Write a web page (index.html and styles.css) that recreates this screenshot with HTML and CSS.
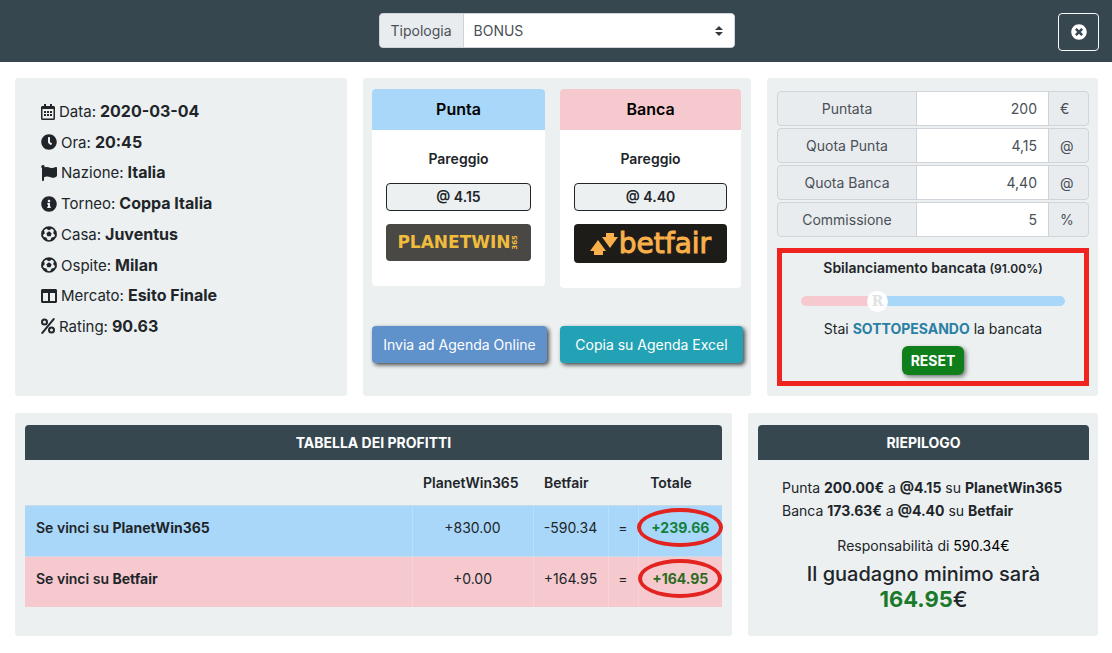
FILE: index.html
```html
<!DOCTYPE html>
<html lang="it">
<head>
    <meta charset="UTF-8">
    <meta name="viewport" content="width=device-width, initial-scale=1.0">
    <title>Calcolatore BONUS</title>
    <link rel="stylesheet" href="styles.css">
</head>
<body>
    <header class="topbar">
        <div class="input-group tipologia">
            <label for="tipologia">Tipologia</label>
            <select id="tipologia">
                <option>BONUS</option>
            </select>
        </div>
        <button type="button" class="close" aria-label="Chiudi">
            <svg class="icon" viewBox="0 0 512 512"><path d="M256 8C119 8 8 119 8 256s111 248 248 248 248-111 248-248S393 8 256 8zm121.600 313.100c4.700 4.700 4.700 12.300 0 17L338 377.600c-4.700 4.700-12.300 4.700-17 0L256 312l-65.100 65.600c-4.700 4.700-12.300 4.700-17 0L134.400 338c-4.700-4.700-4.700-12.300 0-17l65.600-65-65.600-65.100c-4.700-4.700-4.700-12.300 0-17l39.600-39.600c4.700-4.700 12.300-4.700 17 0l65 65.700 65.100-65.600c4.700-4.700 12.300-4.700 17 0l39.600 39.600c4.700 4.700 4.700 12.300 0 17L312 256l65.600 65.100z"/></svg>
        </button>
    </header>

    <main>
        <div class="row row-top">
            <section class="panel">
                <ul class="event">
                    <li>
                        <svg class="icon narrow" viewBox="0 0 448 512"><path d="M148 288h-40c-6.600 0-12-5.400-12-12v-40c0-6.600 5.400-12 12-12h40c6.600 0 12 5.400 12 12v40c0 6.600-5.400 12-12 12zm108-12v-40c0-6.600-5.400-12-12-12h-40c-6.600 0-12 5.400-12 12v40c0 6.600 5.400 12 12 12h40c6.600 0 12-5.400 12-12zm96 0v-40c0-6.600-5.400-12-12-12h-40c-6.600 0-12 5.400-12 12v40c0 6.600 5.400 12 12 12h40c6.600 0 12-5.400 12-12zm-96 96v-40c0-6.600-5.400-12-12-12h-40c-6.600 0-12 5.400-12 12v40c0 6.600 5.400 12 12 12h40c6.600 0 12-5.400 12-12zm-96 0v-40c0-6.600-5.400-12-12-12h-40c-6.600 0-12 5.400-12 12v40c0 6.600 5.400 12 12 12h40c6.600 0 12-5.400 12-12zm192 0v-40c0-6.600-5.400-12-12-12h-40c-6.600 0-12 5.400-12 12v40c0 6.600 5.400 12 12 12h40c6.600 0 12-5.400 12-12zm96-260v352c0 26.500-21.500 48-48 48H48c-26.500 0-48-21.500-48-48V112c0-26.500 21.500-48 48-48h48V12c0-6.600 5.400-12 12-12h40c6.600 0 12 5.400 12 12v52h128V12c0-6.600 5.400-12 12-12h40c6.600 0 12 5.400 12 12v52h48c26.500 0 48 21.500 48 48zm-48 346V160H48v298c0 3.300 2.700 6 6 6h340c3.300 0 6-2.700 6-6z"/></svg>
                        Data: <b>2020-03-04</b>
                    </li>
                    <li>
                        <svg class="icon" viewBox="0 0 512 512"><path d="M256,8C119,8,8,119,8,256S119,504,256,504,504,393,504,256,393,8,256,8Zm92.490,313h0l-20,25a16,16,0,0,1-22.490,2.500h0l-67-49.720a40,40,0,0,1-15-31.230V112a16,16,0,0,1,16-16h32a16,16,0,0,1,16,16V256l58,42.500A16,16,0,0,1,348.490,321Z"/></svg>
                        Ora: <b>20:45</b>
                    </li>
                    <li>
                        <svg class="icon" viewBox="0 0 512 512"><path d="M349.565 98.783C295.978 98.783 251.721 64 184.348 64c-24.955 0-47.309 4.384-68.045 12.013a55.947 55.947 0 0 0 3.586-23.562C118.117 24.015 94.806 1.206 66.338.048 34.345-1.254 8 24.296 8 56c0 19.026 9.497 35.825 24 45.945V488c0 13.255 10.745 24 24 24h16c13.255 0 24-10.745 24-24v-94.400c28.311-12.064 63.582-22.122 114.435-22.122 53.588 0 97.844 34.783 165.217 34.783 48.169 0 86.667-16.294 122.505-40.858C506.840 359.452 512 349.571 512 339.045v-243.100c0-23.393-24.269-38.870-45.485-29.016-34.338 15.948-76.454 31.854-116.950 31.854z"/></svg>
                        Nazione: <b>Italia</b>
                    </li>
                    <li>
                        <svg class="icon" viewBox="0 0 512 512"><path d="M256 8C119.043 8 8 119.083 8 256c0 136.997 111.043 248 248 248s248-111.003 248-248C504 119.083 392.957 8 256 8zm0 110c23.196 0 42 18.804 42 42s-18.804 42-42 42-42-18.804-42-42 18.804-42 42-42zm56 254c0 6.627-5.373 12-12 12h-88c-6.627 0-12-5.373-12-12v-24c0-6.627 5.373-12 12-12h12v-64h-12c-6.627 0-12-5.373-12-12v-24c0-6.627 5.373-12 12-12h64c6.627 0 12 5.373 12 12v100h12c6.627 0 12 5.373 12 12v24z"/></svg>
                        Torneo: <b>Coppa Italia</b>
                    </li>
                    <li>
                        <svg class="icon" viewBox="0 0 512 512">
                            <defs>
                                <g id="ball">
                                    <circle cx="256" cy="256" r="222" fill="none" stroke="currentColor" stroke-width="52"/>
                                    <path d="M256 168l84 61-32 99H204l-32-99zM150 40h212l-44 60-62 38-62-38zM490 160l10 190-60-70-50-50 20-70zM440 400l-120 90-10-70 30-52 70-16zM72 400l120 90 10-70-30-52-70-16zM22 160L12 350l60-70 50-50-20-70z"/>
                                </g>
                            </defs>
                            <use href="#ball"/>
                        </svg>
                        Casa: <b>Juventus</b>
                    </li>
                    <li>
                        <svg class="icon" viewBox="0 0 512 512"><use href="#ball"/></svg>
                        Ospite: <b>Milan</b>
                    </li>
                    <li>
                        <svg class="icon" viewBox="0 0 512 512"><path d="M464 32H48C21.490 32 0 53.490 0 80v352c0 26.510 21.490 48 48 48h416c26.510 0 48-21.490 48-48V80c0-26.510-21.490-48-48-48zM224 416H64V160h160v256zm224 0H288V160h160v256z"/></svg>
                        Mercato: <b>Esito Finale</b>
                    </li>
                    <li>
                        <svg class="icon narrow" viewBox="0 0 448 512">
                            <g fill="none" stroke="currentColor" stroke-width="64">
                                <circle cx="112" cy="128" r="80"/>
                                <circle cx="336" cy="384" r="80"/>
                                <path d="M406 36L42 476" stroke-linecap="round"/>
                            </g>
                        </svg>
                        Rating: <b>90.63</b>
                    </li>
                </ul>
            </section>

            <section class="panel bets">
                <div class="cards">
                    <article class="card">
                        <h2 class="punta">Punta</h2>
                        <div class="card-body">
                            <p>Pareggio</p>
                            <div class="odds">@ 4.15</div>
                            <div class="logo planetwin">PLANETWIN<small>365</small></div>
                        </div>
                    </article>
                    <article class="card">
                        <h2 class="banca">Banca</h2>
                        <div class="card-body">
                            <p>Pareggio</p>
                            <div class="odds">@ 4.40</div>
                            <div class="logo betfair">
                                <svg viewBox="0 0 28 22"><path d="M8 7l8 11h-3v4H4v-4H0zM16 0h8v4h4l-8 11-8-11h4z"/></svg>
                                betfair
                            </div>
                        </div>
                    </article>
                </div>
                <div class="actions">
                    <button type="button" class="btn online">Invia ad Agenda Online</button>
                    <button type="button" class="btn excel">Copia su Agenda Excel</button>
                </div>
            </section>

            <section class="panel calc">
                <div class="fields">
                    <div class="input-group">
                        <label for="puntata">Puntata</label>
                        <input type="text" id="puntata" value="200">
                        <span class="unit">€</span>
                    </div>
                    <div class="input-group">
                        <label for="quotaPunta">Quota Punta</label>
                        <input type="text" id="quotaPunta" value="4,15">
                        <span class="unit">@</span>
                    </div>
                    <div class="input-group">
                        <label for="quotaBanca">Quota Banca</label>
                        <input type="text" id="quotaBanca" value="4,40">
                        <span class="unit">@</span>
                    </div>
                    <div class="input-group">
                        <label for="commissione">Commissione</label>
                        <input type="text" id="commissione" value="5">
                        <span class="unit">%</span>
                    </div>
                </div>
                <div class="balance">
                    <label for="sbilanciamento">Sbilanciamento bancata <small>(91.00%)</small></label>
                    <div class="slider">
                        <input type="range" id="sbilanciamento" min="88" max="99" value="91">
                        <span class="thumb-text">R</span>
                    </div>
                    <p>Stai <b>SOTTOPESANDO</b> la bancata</p>
                    <button type="button" class="reset">RESET</button>
                </div>
            </section>
        </div>

        <div class="row row-bottom">
            <section class="panel profits">
                <h3>TABELLA DEI PROFITTI</h3>
                <table>
                    <colgroup>
                        <col>
                        <col class="col-book">
                        <col class="col-exchange">
                        <col class="col-equal">
                        <col class="col-total">
                    </colgroup>
                    <thead>
                        <tr>
                            <th></th>
                            <th>PlanetWin365</th>
                            <th>Betfair</th>
                            <th></th>
                            <th>Totale</th>
                        </tr>
                    </thead>
                    <tbody>
                        <tr class="punta">
                            <th>Se vinci su <b>PlanetWin365</b></th>
                            <td>+830.00</td>
                            <td>-590.34</td>
                            <td>=</td>
                            <td><span class="total">+239.66</span></td>
                        </tr>
                        <tr class="banca">
                            <th>Se vinci su <b>Betfair</b></th>
                            <td>+0.00</td>
                            <td>+164.95</td>
                            <td>=</td>
                            <td><span class="total">+164.95</span></td>
                        </tr>
                    </tbody>
                </table>
            </section>

            <section class="panel summary">
                <h3>RIEPILOGO</h3>
                <p class="steps">
                    Punta <b>200.00€</b> a <b>@4.15</b> su <b>PlanetWin365</b><br>
                    Banca <b>173.63€</b> a <b>@4.40</b> su <b>Betfair</b>
                </p>
                <p class="liability">Responsabilità di <span>590.34€</span></p>
                <p class="gain">Il guadagno minimo sarà <span><b>164.95</b>€</span></p>
            </section>
        </div>
    </main>
</body>
</html>
```
FILE: styles.css
```css
* {
    box-sizing: border-box;
}
body {
    margin: 0;
    font-family: Inter, "Liberation Sans", sans-serif;
    font-size: 14px;
    line-height: 23px;
    color: #212529;
    background: #fff;
}
h2, h3, p, ul {
    margin: 0;
    padding: 0;
}
b {
    font-weight: 700;
}
button, input, select {
    font: inherit;
}
.icon {
    width: 16px;
    height: 16px;
    fill: currentColor;
}
.icon.narrow {
    width: 14px;
}
.punta {
    background: #a9d7fa;
}
.banca {
    background: #f6c9cf;
}

/* top bar */
.topbar {
    display: grid;
    grid-template-columns: 1fr 356px 1fr;
    align-items: start;
    padding: 13px 13px 11px 14px;
    background: #37474f;
}
.tipologia {
    grid-column: 2;
}
.close {
    justify-self: end;
    display: flex;
    align-items: center;
    justify-content: center;
    width: 41px;
    height: 38px;
    border: 1px solid #f8f9fa;
    border-radius: 4px;
    background: none;
    color: #fff;
    cursor: pointer;
}

/* input groups */
.input-group {
    display: flex;
    height: 35px;
    border: 1px solid #ced4da;
    border-radius: 4px;
    overflow: hidden;
    background: #e9ecef;
    color: #495057;
    line-height: 33px;
}
.input-group label {
    padding: 0 11px;
    border-right: 1px solid #ced4da;
    text-align: center;
}
.input-group input, .input-group select {
    flex: 1;
    min-width: 0;
    border: 0;
    padding: 0 11px;
    background: #fff;
    color: #495057;
}
.input-group input {
    text-align: right;
}
.input-group select {
    appearance: none;
    padding: 0 10px;
    background: #fff url("data:image/svg+xml,%3Csvg xmlns='http://www.w3.org/2000/svg' viewBox='0 0 4 5'%3E%3Cpath fill='%23343a40' d='M2 0L0 2h4zm0 5L0 3h4z'/%3E%3C/svg%3E") no-repeat right 11px center / 8px 10px;
}

/* panels */
main {
    display: grid;
    gap: 17px;
    padding: 16px 14px 16px 15px;
}
.row {
    display: grid;
    gap: 16px;
}
.row-top {
    grid-template-columns: minmax(0, 332fr) minmax(0, 388fr) minmax(0, 331fr);
}
.row-bottom {
    grid-template-columns: minmax(0, 717fr) minmax(0, 350fr);
}
.panel {
    border-radius: 3px;
    background: #ecf0f1;
}

/* event details */
.event {
    display: flex;
    flex-direction: column;
    justify-content: space-between;
    height: 100%;
    padding: 22px 26px 58px;
    list-style: none;
    font-size: 15px;
}
.event li {
    display: flex;
    align-items: center;
    gap: 4px;
}
.event b {
    font-size: 16px;
}

/* punta / banca */
.bets {
    padding: 11px 8px 32px 9px;
}
.cards {
    display: grid;
    grid-template-columns: 173fr 181fr;
    gap: 15px;
    align-items: start;
    padding-right: 2px;
}
.card {
    border-radius: 4px;
    overflow: hidden;
    background: #fff;
    text-align: center;
    font-weight: 600;
}
.card h2 {
    font-size: 16px;
    line-height: 41px;
    font-weight: 600;
    color: #000;
}
.card-body {
    padding: 17px 14px 25px;
}
.odds {
    margin: 13px 0;
    border: 1px solid #212529;
    border-radius: 4px;
    line-height: 26px;
    background: #ecf0f1;
}
.logo {
    display: flex;
    align-items: center;
    justify-content: center;
    border-radius: 4px;
}
.planetwin {
    height: 37px;
    background: #4a4845;
    color: #f0bc3c;
    font-family: "DejaVu Sans", sans-serif;
    font-size: 17px;
    font-weight: 700;
}
.planetwin small {
    writing-mode: vertical-rl;
    transform: rotate(180deg);
    font-size: 7px;
    line-height: 9px;
}
.betfair {
    height: 39px;
    background: #1e1c19;
    color: #f9b04b;
    font-family: "DejaVu Sans", sans-serif;
    font-size: 28px;
    font-weight: 400;
    -webkit-text-stroke: 1px #f9b04b;
}
.betfair svg {
    flex-shrink: 0;
    width: 28px;
    height: 22px;
    margin-right: 1px;
    fill: currentColor;
}
.actions {
    display: grid;
    grid-template-columns: 175fr 183fr;
    gap: 13px;
    margin-top: 38px;
}
.btn {
    height: 37px;
    padding: 0;
    border: 0;
    border-radius: 4px;
    color: #fff;
    box-shadow: 2px 2px 4px rgba(0, 0, 0, 0.7);
    cursor: pointer;
}
.online {
    background: #5f91cb;
}
.excel {
    background: #23a2b6;
}

/* calculator */
.calc {
    padding: 13px 9px 10px 10px;
}
.fields {
    display: grid;
    gap: 2px;
}
.calc .input-group label {
    width: 139px;
}
.unit {
    width: 40px;
    padding-left: 11px;
    border-left: 1px solid #ced4da;
}
.balance {
    margin-top: 11px;
    padding: 3px 19px 6px;
    border: 5px solid #f0241f;
    text-align: center;
}
.balance label {
    font-weight: 600;
}
.balance small {
    font-size: 12px;
}
.slider {
    position: relative;
    display: flex;
    margin: 10px 0 5px;
}
.slider input {
    appearance: none;
    width: 100%;
    height: 10px;
    margin: 6px 0;
    border-radius: 5px;
    background: linear-gradient(to right, #f6c9cf 29%, #a9d7fa 29%);
}
.slider input::-webkit-slider-thumb {
    appearance: none;
    width: 21px;
    height: 21px;
    border-radius: 50%;
    background: #fff;
}
.thumb-text {
    position: absolute;
    left: 29%;
    top: 0;
    transform: translateX(-50%);
    font-family: "DejaVu Serif", serif;
    font-size: 14px;
    font-weight: 700;
    line-height: 22px;
    color: #dfe1e3;
    pointer-events: none;
}
.balance b {
    color: #2a7fa5;
}
.reset {
    height: 29px;
    margin-top: 6px;
    padding: 0 9px;
    border: 0;
    border-radius: 6px;
    background: #0f7f1c;
    color: #fff;
    font-weight: 700;
    box-shadow: 2px 2px 4px rgba(0, 0, 0, 0.5);
    cursor: pointer;
}

/* profits table */
.profits {
    padding: 12px 10px 29px;
}
h3 {
    border-radius: 4px 4px 0 0;
    background: #37474f;
    color: #fff;
    font-size: 14px;
    line-height: 35px;
    text-align: center;
}
table {
    width: 100%;
    table-layout: fixed;
    border-collapse: collapse;
}
.col-book {
    width: 121px;
}
.col-exchange {
    width: 75px;
}
.col-equal {
    width: 30px;
}
.col-total {
    width: 84px;
}
th, td {
    padding: 11px 0;
    text-align: center;
}
th {
    padding-left: 11px;
    text-align: left;
    font-weight: 600;
}
thead th:last-child {
    padding-left: 0;
    padding-right: 18px;
    text-align: center;
}
tbody th, tbody td {
    padding-top: 10px;
    padding-bottom: 17px;
    border-top: 1px solid #c9dbe8;
}
tbody td {
    border-left: 1px solid rgba(255, 255, 255, 0.2);
}
.total {
    position: relative;
    color: #14803c;
    font-weight: 700;
}
.total::after {
    content: "";
    position: absolute;
    inset: -11px -14px;
    border: 4px solid #e2231f;
    border-radius: 50%;
}
.banca .total {
    color: #2d6b1f;
}

/* summary */
.summary {
    padding: 12px 9px 24px 10px;
    text-align: center;
}
.steps {
    padding: 16px 14px 0 24px;
    text-align: left;
}
.liability {
    margin-top: 12px;
}
.liability span {
    color: #000;
}
.gain {
    margin-top: 5px;
    font-size: 20px;
    line-height: 25px;
    font-weight: 500;
}
.gain span {
    display: block;
    font-size: 22px;
}
.gain b {
    color: #1b7a2a;
}
```
